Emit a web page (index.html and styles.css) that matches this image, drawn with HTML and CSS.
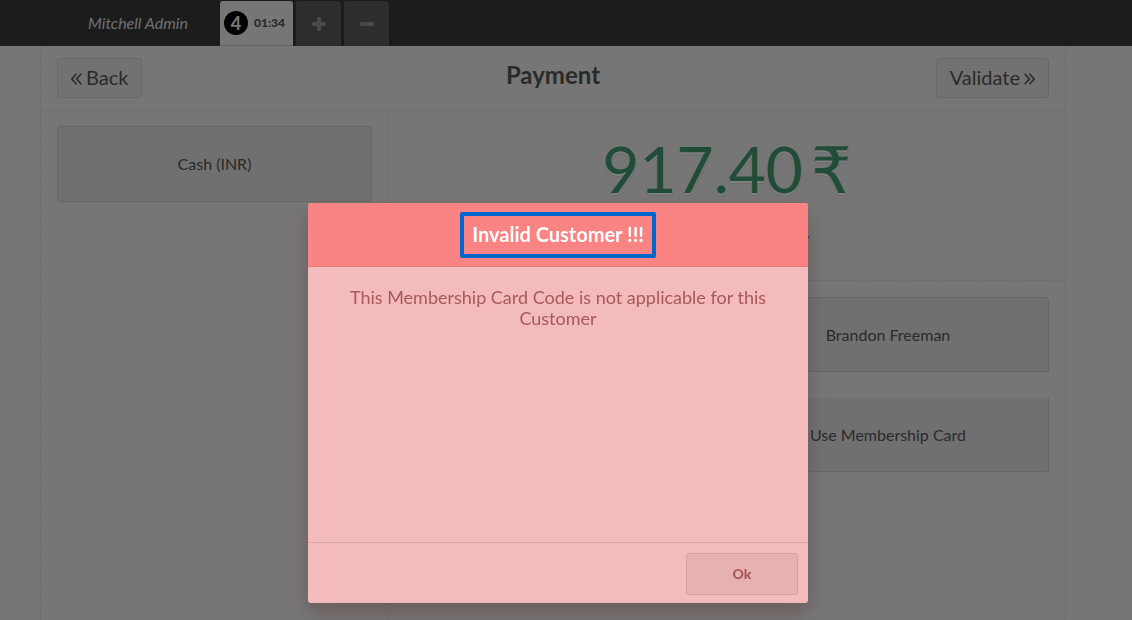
FILE: index.html
```html
<!DOCTYPE html>
<html lang="en">
<head>
<meta charset="utf-8">
<title>Payment</title>
<link rel="stylesheet" href="styles.css">
</head>
<body>
<header class="topbar">
  <span class="username">Mitchell Admin</span>
  <nav class="orders">
    <button class="order order-active" type="button"><span class="order-number">4</span><span class="order-time">01:34</span></button>
    <button class="order order-square" type="button" aria-label="New order">
      <svg width="14" height="14" viewBox="0 0 14 14"><path d="M5.700 0h2.600q.7 0 .7.7V5h4.300q.7 0 .7.7v2.600q0 .7-.7.7H9v4.300q0 .7-.7.7H5.700q-.7 0-.7-.7V9H.7Q0 9 0 8.300V5.700Q0 5 .7 5H5V.7Q5 0 5.700 0z"/></svg>
    </button>
    <button class="order order-square" type="button" aria-label="Delete order">
      <svg width="14" height="14" viewBox="0 0 14 14"><rect y="5" width="14" height="4" rx="1"/></svg>
    </button>
  </nav>
</header>
<main class="screen">
  <div class="screen-top">
    <button class="button nav-button" type="button"><svg class="chevrons" width="11" height="12" viewBox="0 0 11 12"><path d="M5.500 0.700 0.900 6l4.600 5.300M10.300 0.700 5.700 6l4.600 5.300"/></svg>Back</button>
    <h1 class="title">Payment</h1>
    <button class="button nav-button" type="button">Validate<svg class="chevrons" width="11" height="12" viewBox="0 0 11 12"><path d="M0.700 0.700 5.300 6 0.700 11.300M5.500 0.700 10.100 6l-4.600 5.300"/></svg></button>
  </div>
  <div class="columns">
    <section class="methods"><button class="button wide-button" type="button">Cash (INR)</button></section>
    <section class="details">
      <div class="summary">
        <div class="total">917.40 <span class="currency">₹</span></div>
        <div class="message">.</div>
      </div>
      <div class="actions">
        <button class="button wide-button customer" type="button">Brandon Freeman</button>
        <button class="button wide-button membership" type="button">Use Membership Card</button>
      </div>
    </section>
  </div>
</main>
<div class="overlay">
  <div class="popup" role="alertdialog" aria-labelledby="popup-title" aria-describedby="popup-body">
    <div class="popup-header"><h2 class="popup-title" id="popup-title">Invalid Customer !!!</h2></div>
    <p class="popup-body" id="popup-body">This Membership Card Code is not applicable for this Customer</p>
    <div class="popup-footer"><button class="popup-button" type="button">Ok</button></div>
  </div>
</div>
</body>
</html>
```
FILE: styles.css
```css
* { box-sizing: border-box; }
body {
  margin: 0;
  min-height: 100vh;
  display: flex;
  flex-direction: column;
  overflow: hidden;
  background: #eeeded;
  color: #555;
  font: 16px/20px Lato, "Noto Sans", sans-serif;
}
button { font: inherit; color: inherit; cursor: pointer; }
.topbar {
  display: flex;
  height: 46px;
  background: #393939;
}
.username {
  width: 220px;
  padding-left: 88px;
  line-height: 46px;
  font-style: italic;
  color: #ddd;
}
.orders { display: flex; gap: 3px; padding-top: 1px; }
.order {
  display: flex;
  align-items: center;
  justify-content: center;
  border: 0;
  border-radius: 3px 3px 0 0;
  padding: 0;
}
.order-active {
  width: 73px;
  gap: 6px;
  padding-right: 4px;
  background: #eeeded;
  border-bottom: 1px solid #ccc;
  font-size: 12px;
  font-weight: 900;
}
.order-number {
  width: 24px;
  height: 24px;
  border-radius: 50%;
  background: #000;
  color: #eee;
  font-size: 18px;
  line-height: 24px;
  font-weight: bold;
}
.order-square { width: 45px; background: #5a5a5a; }
.order-square svg { fill: #949494; }
.screen {
  flex: 1;
  display: flex;
  flex-direction: column;
  margin: 0 66px 0 40px;
  border: 1px dashed #d7d7d7;
  border-width: 0 1px;
}
.screen-top {
  display: grid;
  grid-template-columns: 1fr auto 1fr;
  height: 65px;
  padding: 12px 16px;
  border-bottom: 1px dashed #d7d7d7;
}
.button {
  background: #e2e1e1;
  border: 1px solid #cdcdcd;
  border-radius: 3px;
}
.nav-button {
  justify-self: start;
  height: 40px;
  padding: 0 13px 2px;
  font-size: 20px;
}
.nav-button:last-child { justify-self: end; }
.screen-top .nav-button { background: #e5e4e4; border-color: #d2d2d2; }
.chevrons { margin: 0 4px 0 0; fill: none; stroke: #555; stroke-width: 1.6; }
.nav-button:last-child .chevrons { margin: 0 0 0 4px; }
.title { margin: 0; font-size: 24px; line-height: 34px; }
.columns { flex: 1; display: grid; grid-template-columns: 348px 1fr; }
.methods { padding: 15px 16px; border-right: 1px dashed #d7d7d7; }
.wide-button { display: block; width: 100%; height: 76px; }
.summary {
  height: 170px;
  border-bottom: 1px dashed #d7d7d7;
  text-align: center;
}
.total {
  display: flex;
  justify-content: center;
  align-items: baseline;
  gap: 8px;
  padding-top: 18px;
  font-size: 64px;
  line-height: 80px;
  color: #43996e;
  text-shadow: 0 2px #fff, 0 2px 2px rgba(0, 0, 0, 0.27);
}
.currency { font-family: "DejaVu Sans", sans-serif; line-height: 1; }
.message { padding: 13px 0 0 162px; }
.actions {
  display: flex;
  flex-direction: column;
  gap: 26px;
  width: 50%;
  margin-left: auto;
  padding: 16px 16px 0 0;
}
.customer { border-radius: 3px 3px 0 0; }
.membership { height: 74px; border-top: 0; border-radius: 0 0 3px 3px; }
.actions .customer { height: 75px; }
.overlay {
  position: fixed;
  inset: 0;
  display: flex;
  justify-content: center;
  align-items: flex-start;
  padding: 203px 16px 0 0;
  background: rgba(0, 0, 0, 0.5);
}
.popup {
  display: flex;
  flex-direction: column;
  width: 500px;
  min-height: 400px;
  border-radius: 3px;
  background: #f3bbbb;
  box-shadow: 0 10px 20px rgba(92, 51, 51, 0.4);
  color: #a85959;
  text-align: center;
}
.popup-header {
  display: flex;
  justify-content: center;
  padding: 9px 9px 8px;
  border-bottom: 1px solid #e87878;
  border-radius: 3px 3px 0 0;
  background: #fa8383;
}
.popup-title {
  margin: 0;
  padding: 0 8px 2px;
  border: 4px solid #0066cc;
  border-radius: 2px;
  color: #fff;
  font-size: 20px;
  line-height: 36px;
}
.popup-body { flex: 1; margin: 0; padding: 20px 40px; font-size: 18px; line-height: 21px; }
.popup-footer {
  display: flex;
  justify-content: flex-end;
  padding: 10px 10px 8px;
  border-top: 1px solid #dba8a8;
}
.popup-button {
  width: 112px;
  height: 42px;
  border: 1px solid #d5a3a3;
  border-radius: 2px;
  background: #e6b1b1;
  font-size: 14px;
  font-weight: 900;
}
```
